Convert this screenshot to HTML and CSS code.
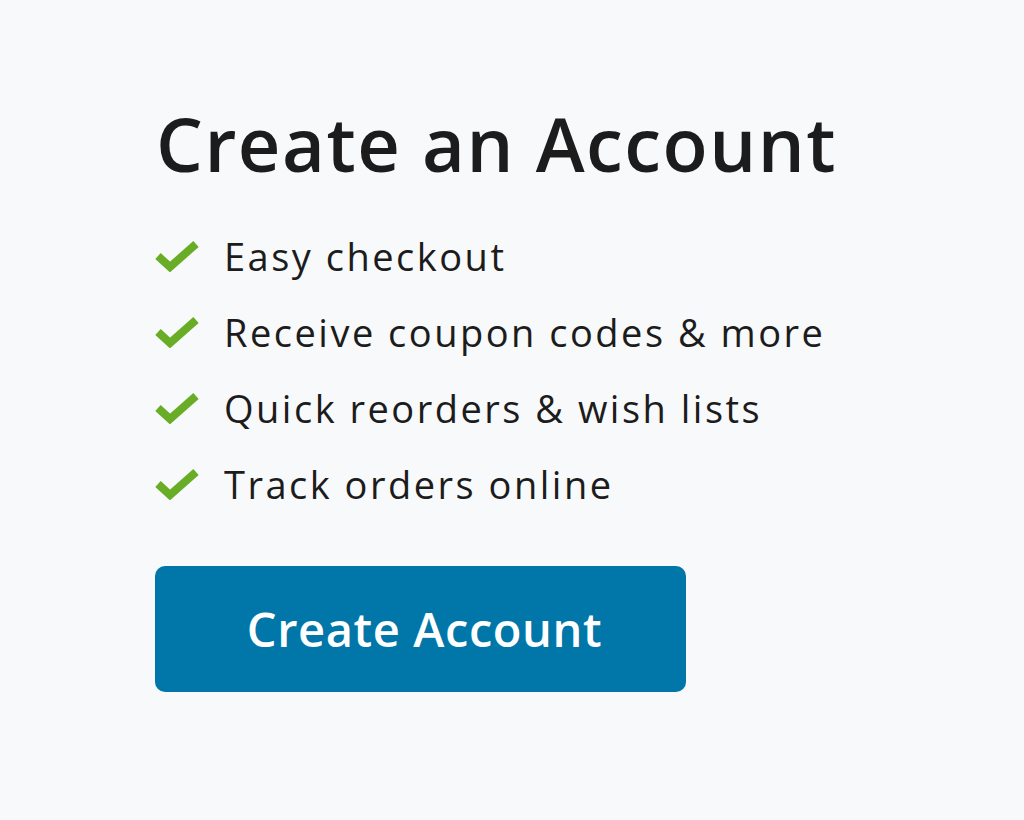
FILE: index.html
```html
<!DOCTYPE html>
<html>

<head>
  <title>Create an Account</title>
  <link rel="stylesheet" href="styles.css">
</head>

<body>
  <div class="container">
    <h1>Create an Account</h1>
    <ul class="benefits">
      <li>
        <svg class="check" viewBox="0 0 44 32"><path d="M3 16 L15 27 L41 4" /></svg>
        <span>Easy checkout</span>
      </li>
      <li>
        <svg class="check" viewBox="0 0 44 32"><path d="M3 16 L15 27 L41 4" /></svg>
        <span>Receive coupon codes &amp; more</span>
      </li>
      <li>
        <svg class="check" viewBox="0 0 44 32"><path d="M3 16 L15 27 L41 4" /></svg>
        <span>Quick reorders &amp; wish lists</span>
      </li>
      <li>
        <svg class="check" viewBox="0 0 44 32"><path d="M3 16 L15 27 L41 4" /></svg>
        <span>Track orders online</span>
      </li>
    </ul>
    <button class="create-btn">Create Account</button>
  </div>
</body>

</html>
```

FILE: styles.css
```css
* {
  box-sizing: border-box;
}

body {
  font-family: "Open Sans", "Noto Sans", sans-serif;
  background-color: #f8f9fb;
  color: #1c1c1c;
  margin: 0;
}

.container {
  padding: 96px 0 0 155px;
}

h1 {
  font-size: 74px;
  font-weight: 600;
  line-height: 96px;
  letter-spacing: 1.5px;
  margin: 0 0 0 1px;
}

.benefits {
  list-style: none;
  margin: 41px 0 0;
  padding: 0;
  display: flex;
  flex-direction: column;
  gap: 30px;
}

.benefits li {
  display: flex;
  align-items: center;
  gap: 25px;
  font-size: 38px;
  line-height: 46px;
  letter-spacing: 2.5px;
}

.check {
  width: 44px;
  height: 32px;
  flex-shrink: 0;
}

.check path {
  fill: none;
  stroke: #68ad25;
  stroke-width: 8;
}

.create-btn {
  margin-top: 59px;
  width: 531px;
  height: 126px;
  background-color: #0077a8;
  color: #fff;
  border: none;
  border-radius: 10px;
  font-family: "Open Sans", "Noto Sans", sans-serif;
  font-size: 47px;
  font-weight: 600;
  letter-spacing: 0.6px;
  padding: 0 0 0 8px;
  cursor: pointer;
}
```
